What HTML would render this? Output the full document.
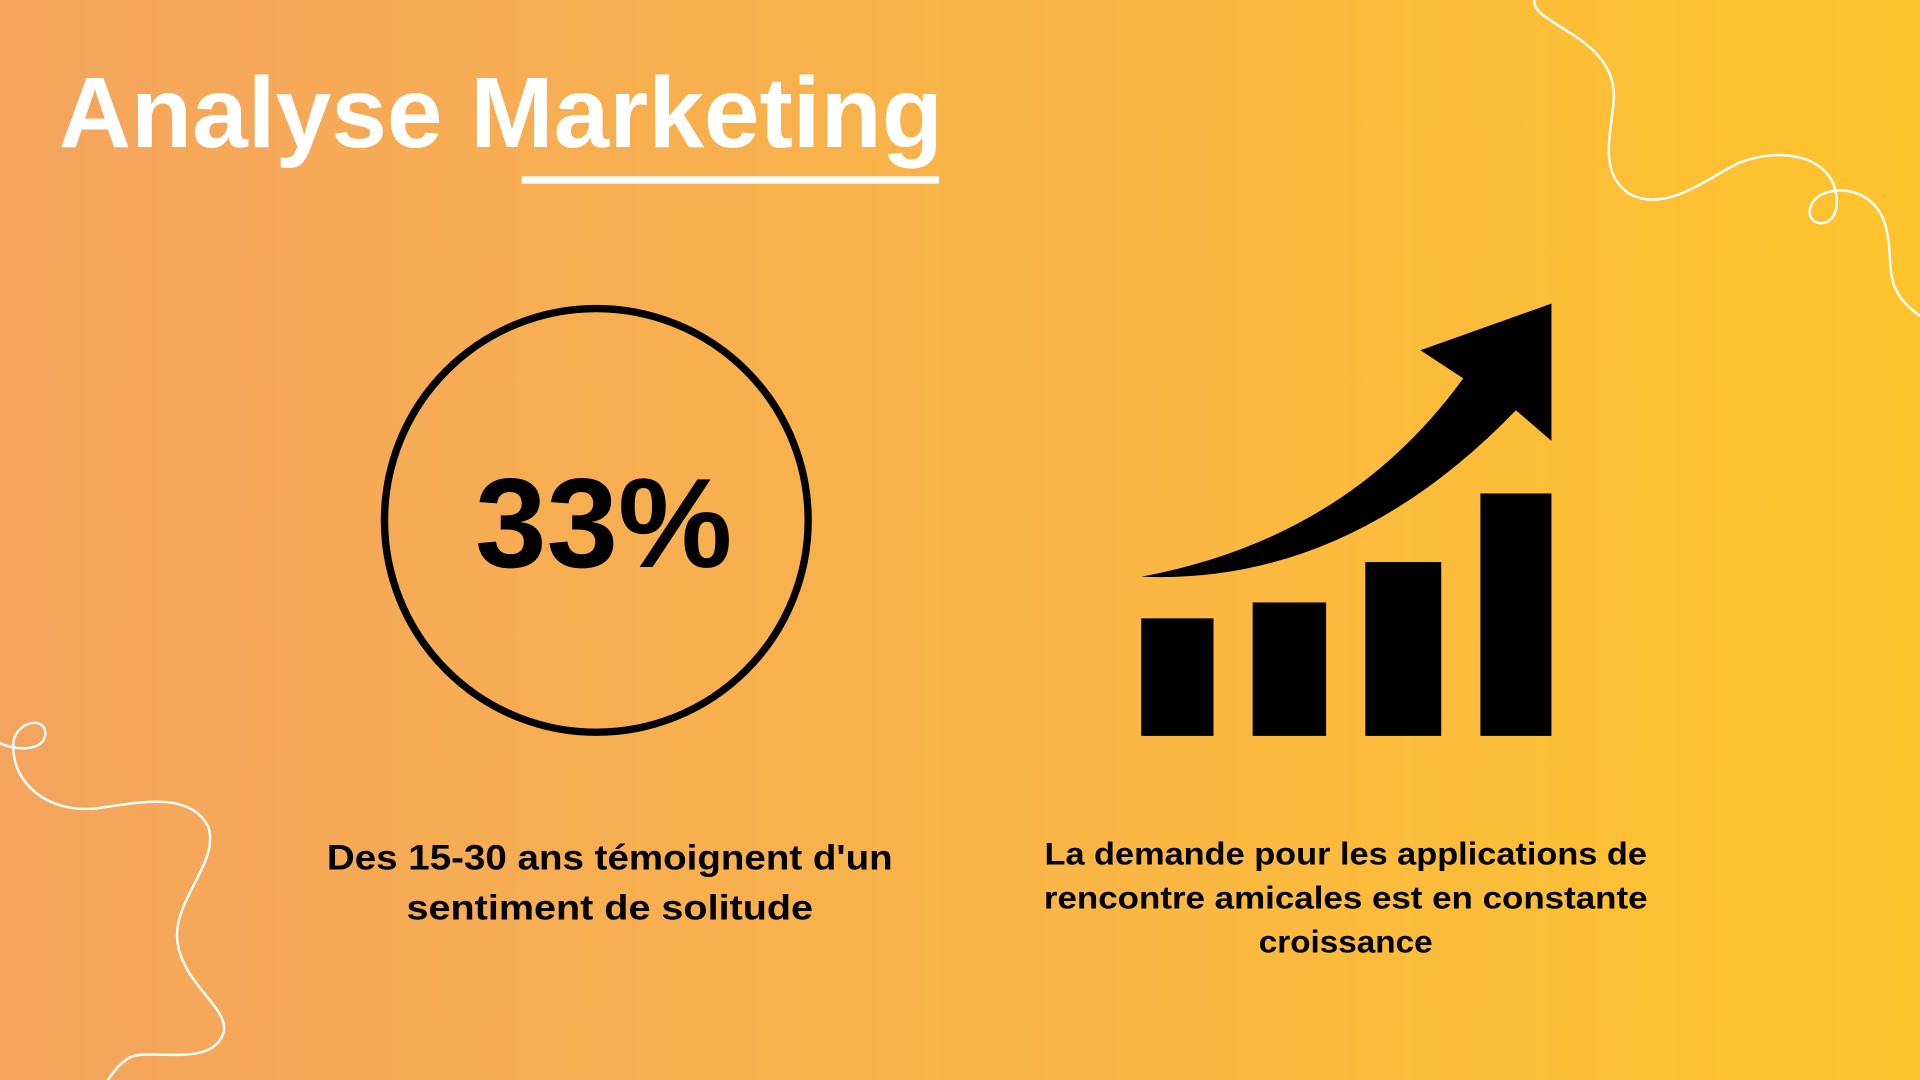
<!DOCTYPE html>
<html><head><meta charset="utf-8"><style>html,body{margin:0;padding:0;width:1920px;height:1080px;overflow:hidden}</style></head>
<body>
<svg width="1920" height="1080" viewBox="0 0 1568 882" xmlns="http://www.w3.org/2000/svg">
<defs><linearGradient id="g" x1="0" y1="0" x2="1" y2="0">
<stop offset="0" stop-color="#f4a45e"/><stop offset="0.5" stop-color="#f9b449"/><stop offset="1" stop-color="#ffc42c"/></linearGradient></defs>
<rect width="1568" height="882" fill="url(#g)"/>
<g fill="none" stroke="#fff" stroke-width="2">
<path d="M1253,0 C1250,20 1320,30 1318,80 C1316,110 1305,140 1330,158 C1360,175 1395,145 1420,133 C1460,118 1500,130 1500,165 C1500,190 1472,185 1479,168 C1486,150 1530,148 1540,185 C1548,215 1535,235 1568,258"/>
<path d="M0,607 C10,612 35,615 37,600 C38,585 15,588 11,605 C8,640 40,665 80,660 C110,656 155,645 170,675 C180,705 140,735 145,770 C150,805 190,825 182,845 C172,870 130,858 110,862 C100,865 93,875 88,882"/>
</g>
<text x="48" y="120" font-family="Liberation Sans, sans-serif" font-weight="bold" font-size="82" fill="#fff" textLength="722" lengthAdjust="spacingAndGlyphs">Analyse Marketing</text>
<rect x="426" y="144" width="341" height="6" fill="#fff"/>
<circle cx="487" cy="425" r="173" fill="none" stroke="#000" stroke-width="6"/>
<text x="388" y="463" font-family="Liberation Sans, sans-serif" font-weight="bold" font-size="104" fill="#000" textLength="210" lengthAdjust="spacingAndGlyphs">33%</text>
<g fill="#000">
<rect x="932" y="505" width="59" height="96"/>
<rect x="1023" y="492" width="60" height="109"/>
<rect x="1115" y="459" width="62" height="142"/>
<rect x="1209" y="403" width="58" height="198"/>
<path d="M932,471 Q1100,440 1195,309 L1160,286 L1267,248 L1267,360 L1238,335 Q1100,478 932,471 Z"/>
</g>
<g font-family="Liberation Sans, sans-serif" font-weight="bold" fill="#000" text-anchor="middle">
<text x="498" y="710" font-size="29" textLength="462" lengthAdjust="spacingAndGlyphs">Des 15-30 ans témoignent d'un</text>
<text x="498" y="751" font-size="29" textLength="332" lengthAdjust="spacingAndGlyphs">sentiment de solitude</text>
<text x="1099" y="706" font-size="26" textLength="492" lengthAdjust="spacingAndGlyphs">La demande pour les applications de</text>
<text x="1099" y="742" font-size="26" textLength="493" lengthAdjust="spacingAndGlyphs">rencontre amicales est en constante</text>
<text x="1099" y="778" font-size="26" textLength="142" lengthAdjust="spacingAndGlyphs">croissance</text>
</g>
</svg>
</body></html>
